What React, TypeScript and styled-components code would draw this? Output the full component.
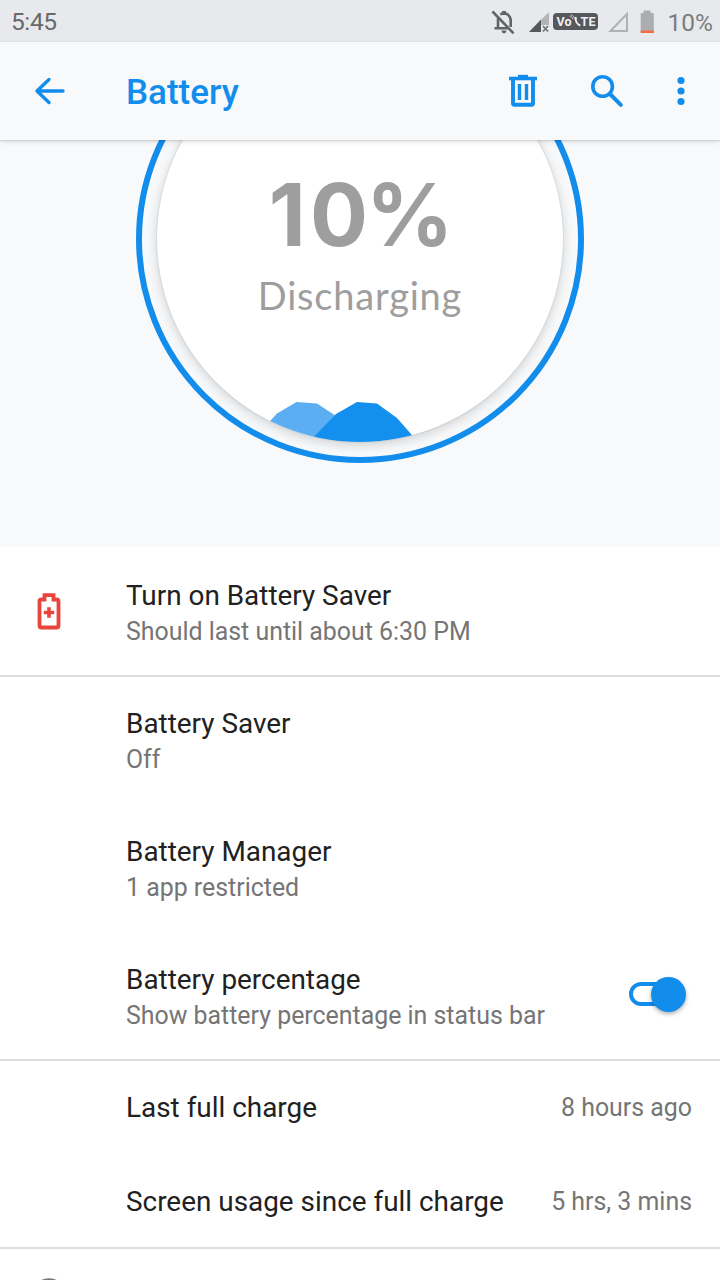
import React from "react";
import styled, { createGlobalStyle } from "styled-components";

const BLUE = "#138dec";

const GlobalStyle = createGlobalStyle`
  html, body { margin: 0; padding: 0; background: #fff; }
  body { font-family: Roboto, "Liberation Sans", sans-serif; overflow: hidden; }
  * { box-sizing: border-box; }
`;

const Screen = styled.div`
  width: 720px;
  height: 1280px;
  overflow: hidden;
  display: flex;
  flex-direction: column;
  background: #fff;
`;

const StatusBar = styled.header`
  flex: none;
  height: 42px;
  background: #e8e9ec;
  display: flex;
  align-items: center;
  justify-content: space-between;
  padding: 2px 7px 0 11px;
  color: #67696c;
  font-size: 24.5px;
  line-height: 40px;
`;

const Clock = styled.span`
  letter-spacing: -0.4px;
`;

const StatusIcons = styled.div`
  display: flex;
  align-items: center;
  height: 40px;
`;

const StatusGlyphs = styled.svg`
  display: block;
  flex: none;
  margin-top: -2px;
`;

const Percent = styled.span`
  color: #7b7d80;
  margin: 1px 0 0 8px;
`;

const Toolbar = styled.nav`
  flex: none;
  position: relative;
  z-index: 1;
  height: 98px;
  background: #f7f9fb;
  box-shadow: 0 1px 2px rgba(0, 0, 0, 0.14), 0 2px 7px rgba(0, 0, 0, 0.09);
  display: flex;
  align-items: center;
  padding: 0 18px 0 28px;
`;

const IconButton = styled.button<{ $gap?: number }>`
  display: block;
  width: 42px;
  height: 42px;
  padding: 0;
  border: 0;
  background: none;
  color: ${BLUE};
  margin-left: ${(p) => p.$gap ?? 0}px;
  svg { display: block; }
`;

const Title = styled.h1`
  flex: 1;
  margin: 4px 0 0 56px;
  color: ${BLUE};
  font-size: 35px;
  line-height: 42px;
  font-weight: 500;
`;

const Hero = styled.section`
  flex: none;
  height: 407px;
  overflow: hidden;
  background: #f7f9fb;
  display: flex;
  justify-content: center;
  align-items: flex-end;
  padding-bottom: 84px;
`;

const Ring = styled.div`
  flex: none;
  width: 448px;
  height: 448px;
  border: 6px solid ${BLUE};
  border-radius: 50%;
  padding: 15px;
`;

const Disc = styled.div`
  width: 406px;
  height: 406px;
  border-radius: 50%;
  overflow: hidden;
  background: #fff;
  box-shadow: 0 0 2px rgba(0, 0, 0, 0.16), 0 3px 12px rgba(0, 0, 0, 0.17);
  display: flex;
  flex-direction: column;
  align-items: center;
  color: #9e9e9e;
`;

const Level = styled.div`
  margin-top: 127px;
  height: 104px;
  font-family: Inter, sans-serif;
  font-size: 86px;
  line-height: 104px;
  font-weight: 700;
  letter-spacing: -2px;
`;

const Digit = styled.span<{ $after: number }>`
  letter-spacing: ${(p) => p.$after}px;
`;

const State = styled.div`
  margin-top: 4px;
  height: 48px;
  font-family: Lato, sans-serif;
  font-size: 38px;
  line-height: 48px;
  letter-spacing: 0.8px;
  white-space: nowrap;
`;

const Wave = styled.svg`
  display: block;
  flex: none;
  margin-top: auto;
`;

const Group = styled.section`
  flex: none;
  border-bottom: 2px solid #dedede;
`;

const Row = styled.div<{ $height: number }>`
  height: ${(p) => p.$height}px;
  display: flex;
  align-items: center;
  padding: 0 28px;
`;

const Leading = styled.div`
  flex: none;
  width: 98px;
  svg { display: block; }
`;

const Labels = styled.div<{ $drop: number }>`
  flex: 1;
  padding-top: ${(p) => p.$drop}px;
  white-space: nowrap;
`;

const Label = styled.div`
  color: #212121;
  font-size: 27.9px;
  line-height: 36px;
`;

const Detail = styled.div`
  color: #757575;
  font-size: 24.9px;
  line-height: 36px;
  white-space: nowrap;
`;

const Value = styled(Detail)<{ $drop: number }>`
  padding-top: ${(p) => p.$drop}px;
`;

const Toggle = styled.div`
  flex: none;
  width: 48px;
  height: 24px;
  margin: 0 15px 2px 0;
  border: 4px solid ${BLUE};
  border-radius: 12px;
  display: flex;
  align-items: center;
`;

const Knob = styled.div`
  flex: none;
  width: 35px;
  height: 35px;
  margin-left: 18px;
  border-radius: 50%;
  background: ${BLUE};
  box-shadow: 0 2px 4px rgba(0, 0, 0, 0.32);
`;

const NextRow = styled.div`
  height: 31px;
  overflow: hidden;
  padding: 29px 0 0 28px;
  svg { display: block; }
`;

type SettingProps = {
  label: string;
  detail?: string;
  value?: string;
  height?: number;
  drop?: number;
  icon?: React.ReactNode;
  control?: React.ReactNode;
};

const Setting = ({ label, detail, value, height = 128, drop = 0, icon, control }: SettingProps) => (
  <Row $height={height}>
    <Leading>{icon}</Leading>
    <Labels $drop={drop}>
      <Label>{label}</Label>
      {detail && <Detail>{detail}</Detail>}
    </Labels>
    {value && <Value $drop={drop}>{value}</Value>}
    {control}
  </Row>
);

const BatteryPlusIcon = () => (
  <svg width="42" height="42" viewBox="0 0 42 42" fill="none">
    <path d="M16.500 5.200h9v4.300h3.200c1 0 1.800.8 1.800 1.800v24.400c0 1-.8 1.800-1.800 1.800H13.300c-1 0-1.800-.8-1.800-1.800V11.300c0-1 .8-1.800 1.800-1.800h3.200z" stroke="#e8453c" strokeWidth="3.800" />
    <path d="M15.800 22.500h10.400M21 17.300v10.400" stroke="#e8453c" strokeWidth="3.600" />
  </svg>
);

export default function App() {
  return (
    <>
      <GlobalStyle />
      <Screen>
        <StatusBar>
          <Clock>5:45</Clock>
          <StatusIcons>
            <StatusGlyphs width="170" height="40" viewBox="490 0 170 40">
              <g fill="none" stroke="#626467" strokeWidth="2.600">
                <path d="M492.500 10.500l21 21.800" />
                <path d="M500.300 13.500c5-3 10.400.5 10.400 6.500v6" />
                <path d="M498 17.300v9.700M494.500 27.300h14" />
              </g>
              <path d="M502 10h4v4h-4zM501.500 29.500h5c-.5 3.800-4.500 3.800-5 0z" fill="#626467" />
              <path d="M549 11v13h-8v-5z" fill="#b2b4b6" />
              <path d="M529 31L541 18.500V31z" fill="#56585b" />
              <path d="M543 25l5 5.500M548 25l-5 5.500" stroke="#727477" strokeWidth="1.700" />
              <rect x="553" y="12" width="45" height="17" rx="4" fill="#56585b" />
              <g fill="#f0f0f1" fontFamily="Roboto, sans-serif" fontWeight="700" fontSize="12.500">
                <text x="556.500" y="25">V</text>
                <text x="564.500" y="25">o</text>
                <text x="580.500" y="25" textLength="15">TE</text>
              </g>
              <path d="M575.800 16c-.8 4 1.500 7.500 4.500 8.500" fill="none" stroke="#f0f0f1" strokeWidth="2" />
              <path d="M569.500 15c2 .2 3 1.300 3.200 3.200M571 13.800c2.300.7 3.300 2 3.400 4.200" fill="none" stroke="#d3d4d5" strokeWidth=".9" />
              <path d="M610.500 30L627 13v17z" fill="none" stroke="#b0b1b3" strokeWidth="2" />
              <path d="M643.500 9.500h7V12h3.300v20H640.700V12h2.800z" fill="#acadae" />
              <path d="M640.700 29.500h13.100V32h-13.100z" fill="#fa6a40" />
            </StatusGlyphs>
            <Percent>10%</Percent>
          </StatusIcons>
        </StatusBar>

        <Toolbar>
          <IconButton aria-label="Back">
            <svg width="42" height="42" viewBox="28 70 42 42" fill="none" stroke="currentColor" strokeWidth="3.400" strokeLinecap="round" strokeLinejoin="round">
              <path d="M63 91H37M49 79.500L37 91l12 11.500" />
            </svg>
          </IconButton>
          <Title>Battery</Title>
          <IconButton aria-label="Delete">
            <svg width="42" height="42" viewBox="502 70 42 42" fill="none" stroke="currentColor">
              <path d="M509 78.500h28" strokeWidth="3.600" />
              <path d="M518 76.300h10" strokeWidth="3" />
              <path d="M513 79v24.300c0 .8.600 1.400 1.400 1.400h17.200c.8 0 1.400-.6 1.400-1.400V79" strokeWidth="3.900" />
              <path d="M519.500 84v16M526.500 84v16" strokeWidth="3.400" />
            </svg>
          </IconButton>
          <IconButton aria-label="Search" $gap={42}>
            <svg width="42" height="42" viewBox="586 70 42 42" fill="none" stroke="currentColor">
              <circle cx="602.600" cy="86.500" r="9.800" strokeWidth="3.600" />
              <path d="M610.500 94.500l10.300 10.300" strokeWidth="4" strokeLinecap="round" />
            </svg>
          </IconButton>
          <IconButton aria-label="More" $gap={32}>
            <svg width="42" height="42" viewBox="660 70 42 42" fill="currentColor">
              <circle cx="681" cy="80.500" r="3.600" />
              <circle cx="681" cy="91" r="3.600" />
              <circle cx="681" cy="101.500" r="3.600" />
            </svg>
          </IconButton>
        </Toolbar>

        <Hero>
          <Ring>
            <Disc>
              <Level><Digit $after={4}>1</Digit><Digit $after={-2}>0</Digit>%</Level>
              <State>Discharging</State>
              <Wave width="406" height="44" viewBox="157 398 406 44">
                <path d="M260 432L277 413.500L296.500 402L317 403.500L334.500 415L345 442H260z" fill="#5aaef1" />
                <path d="M308 443L336 414L357 402L377 403.500L397 418L418 442z" fill="#138fee" />
              </Wave>
            </Disc>
          </Ring>
        </Hero>

        <Group>
          <Setting label="Turn on Battery Saver" detail="Should last until about 6:30 PM" drop={6} icon={<BatteryPlusIcon />} />
        </Group>
        <Group>
          <Setting label="Battery Saver" detail="Off" height={126} drop={4} />
          <Setting label="Battery Manager" detail="1 app restricted" drop={6} />
          <Setting
            label="Battery percentage"
            detail="Show battery percentage in status bar"
            drop={6}
            control={<Toggle><Knob /></Toggle>}
          />
        </Group>
        <Group>
          <Setting label="Last full charge" value="8 hours ago" height={93} />
          <Setting label="Screen usage since full charge" value="5 hrs, 3 mins" height={93} drop={2} />
        </Group>
        <NextRow>
          <svg width="42" height="42" viewBox="0 0 42 42" fill="none">
            <circle cx="21" cy="18" r="16" stroke="#757575" strokeWidth="3.500" />
          </svg>
        </NextRow>
      </Screen>
    </>
  );
}
